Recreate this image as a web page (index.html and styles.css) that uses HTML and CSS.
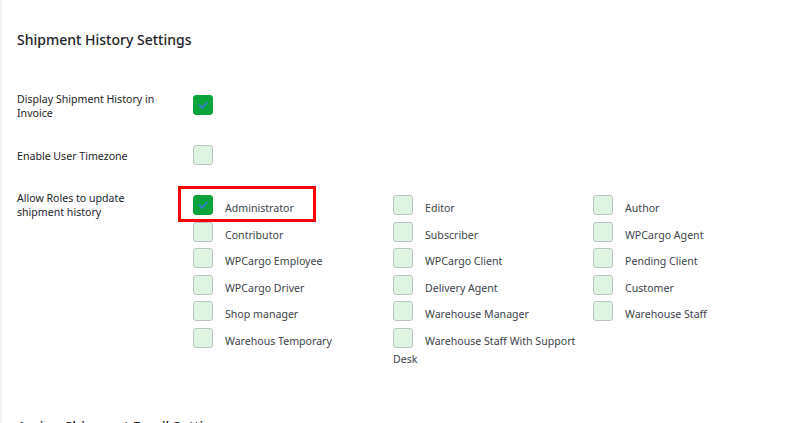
FILE: index.html
```html
<!DOCTYPE html>
<html>
<head>
<meta charset="utf-8">
<link rel="stylesheet" href="styles.css">
</head>
<body>
<div class="panel">
  <h2 class="title">Shipment History Settings</h2>
  <div class="row row-first">
    <div class="label">Display Shipment History in Invoice</div>
    <div class="field field-first"><span class="cb checked"><svg viewBox="0 0 20 20" width="20" height="20"><path d="M6.5 10.2l2.6 2.7 4.8-5.4" fill="none" stroke="#3b7bd1" stroke-width="1.8" stroke-linecap="round" stroke-linejoin="round"/></svg></span></div>
  </div>
  <div class="row row-second">
    <div class="label label-single">Enable User Timezone</div>
    <div class="field"><span class="cb"></span></div>
  </div>
  <div class="row row-third">
    <div class="label">Allow Roles to update shipment history</div>
    <div class="roles">
      <label class="role"><span class="cb checked"><svg viewBox="0 0 20 20" width="20" height="20"><path d="M6.5 10.2l2.6 2.7 4.8-5.4" fill="none" stroke="#3b7bd1" stroke-width="1.8" stroke-linecap="round" stroke-linejoin="round"/></svg></span>Administrator<span class="hl"></span></label>
      <label class="role"><span class="cb"></span>Editor</label>
      <label class="role"><span class="cb"></span>Author</label>
      <label class="role"><span class="cb"></span>Contributor</label>
      <label class="role"><span class="cb"></span>Subscriber</label>
      <label class="role"><span class="cb"></span>WPCargo Agent</label>
      <label class="role"><span class="cb"></span>WPCargo Employee</label>
      <label class="role"><span class="cb"></span>WPCargo Client</label>
      <label class="role"><span class="cb"></span>Pending Client</label>
      <label class="role"><span class="cb"></span>WPCargo Driver</label>
      <label class="role"><span class="cb"></span>Delivery Agent</label>
      <label class="role"><span class="cb"></span>Customer</label>
      <label class="role"><span class="cb"></span>Shop manager</label>
      <label class="role"><span class="cb"></span>Warehouse Manager</label>
      <label class="role"><span class="cb"></span>Warehouse Staff</label>
      <label class="role"><span class="cb"></span>Warehous Temporary</label>
      <label class="role"><span class="cb"></span>Warehouse Staff With Support Desk</label>
    </div>
  </div>
  <h2 class="title title-next">Assign Shipment Email Settings</h2>
</div>
</body>
</html>
```
FILE: styles.css
```css
html, body {
  margin: 0;
  padding: 0;
  background: #ffffff;
}
body {
  font-family: "Noto Sans", "Open Sans", sans-serif;
  font-size: 10.6px;
  color: #2c3338;
  overflow: hidden;
  height: 423px;
}
.panel {
  border-left: 2px solid #f3f3f4;
  padding: 0 0 0 15px;
  height: 423px;
  box-sizing: border-box;
}
.title {
  margin: 0;
  padding-top: 29px;
  font-size: 14px;
  font-weight: 500;
  color: #1d2327;
  line-height: 22px;
}
.row {
  display: flex;
  align-items: flex-start;
}
.row-first {
  margin-top: 41px;
}
.row-second {
  margin-top: 25px;
}
.row-third {
  margin-top: 26px;
}
.label {
  width: 145px;
  margin-right: 31px;
  line-height: 14px;
  padding-top: 0;
  color: #1d2327;
}
.label-single {
  padding-top: 4px;
}
.field-first {
  padding-top: 3px;
}
.cb {
  display: inline-block;
  width: 20px;
  height: 20px;
  box-sizing: border-box;
  border: 1px solid #b8c4c2;
  border-radius: 3px;
  background: #dff5e1;
  vertical-align: top;
}
.cb svg {
  display: block;
  margin: -1px;
}
.cb.checked {
  background: #0aa33a;
  border-color: #0aa33a;
}
.roles {
  display: grid;
  grid-template-columns: repeat(3, 200px);
  row-gap: 4.5px;
  margin-top: 4px;
}
.role {
  display: block;
  position: relative;
  padding-top: 4px;
  line-height: 18px;
  color: #3c434a;
}
.role .cb {
  float: left;
  margin: -4px 12px -4px 0;
}
.hl {
  position: absolute;
  left: -15px;
  top: -9px;
  width: 138px;
  height: 36px;
  box-sizing: border-box;
  border: 3px solid #ff0000;
}
.title-next {
  padding-top: 48px;
}
```
